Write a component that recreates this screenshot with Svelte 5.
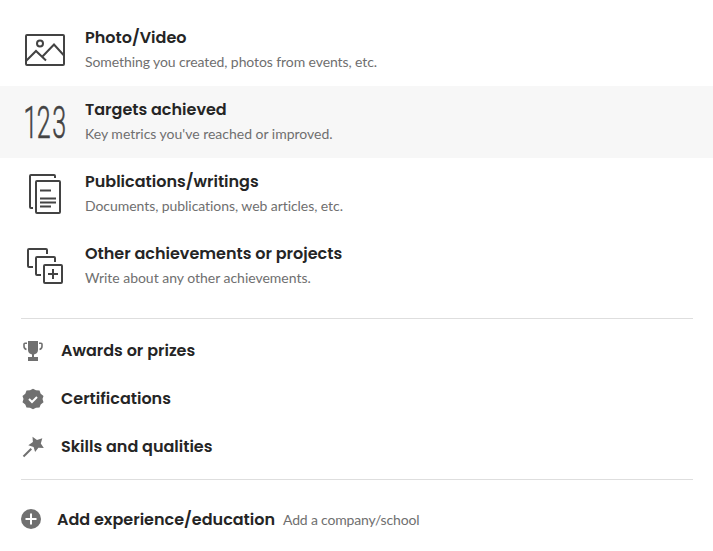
<script lang="ts">
	const featured = [
		{ icon: 'photo', title: 'Photo/Video', text: 'Something you created, photos from events, etc.', tracking: -0.09 },
		{ icon: 'targets', title: 'Targets achieved', text: "Key metrics you've reached or improved.", tracking: -0.01 },
		{ icon: 'documents', title: 'Publications/writings', text: 'Documents, publications, web articles, etc.', tracking: -0.06 },
		{ icon: 'other', title: 'Other achievements or projects', text: 'Write about any other achievements.', tracking: -0.02 }
	];

	const simple = [
		{ icon: 'trophy', title: 'Awards or prizes' },
		{ icon: 'badge', title: 'Certifications' },
		{ icon: 'wand', title: 'Skills and qualities' }
	];

	let active = $state('targets');
</script>

<main class="menu">
	<ul class="featured">
		{#each featured as item}
			<li class="card" class:active={active === item.icon} onmouseenter={() => (active = item.icon)}>
				<svg class="card-icon" viewBox="0 0 48 48" aria-hidden="true">
					{#if item.icon === 'photo'}
						<rect x="5" y="9" width="38" height="30" rx="1" />
						<circle cx="19" cy="17.5" r="3" />
						<path d="M5 35 15 25 25 34.5M21 31 33 18.5 43 29.5" />
					{:else if item.icon === 'targets'}
						<g transform="scale(.57 1)">
							<text y="40" x="4.5 27.5 55">123</text>
						</g>
					{:else if item.icon === 'documents'}
						<path d="M12 38h-2a1 1 0 0 1-1-1V6a1 1 0 0 1 1-1H33a1 1 0 0 1 1 1v2" />
						<rect x="15" y="11" width="24" height="32" rx="1" />
						<path d="M19 20.5h11M19 28.5h16M19 32.5h16M19 36.5h11" />
					{:else}
						<path d="M12 25H8a1 1 0 0 1-1-1V8a1 1 0 0 1 1-1h17a1 1 0 0 1 1 1v4" />
						<path d="M20 33h-4a1 1 0 0 1-1-1V16a1 1 0 0 1 1-1h17a1 1 0 0 1 1 1v4" />
						<rect x="23" y="23" width="18" height="18" rx="1" />
						<path d="M32 27v10M27 32h10" />
					{/if}
				</svg>
				<div class="card-copy">
					<h2>{item.title}</h2>
					<p style={`letter-spacing:${item.tracking}px`}>{item.text}</p>
				</div>
			</li>
		{/each}
	</ul>

	<ul class="simple">
		{#each simple as item}
			<li>
				<svg viewBox="0 0 24 24" aria-hidden="true">
					{#if item.icon === 'trophy'}
						<path d="M7 2h10v9q0 3.500-4 4.500v2.500h4v4H7v-4h4v-2.500q-4-1-4-4.500z" />
						<path class="line" d="M6 4.200H4q-1 0-1 1v2q0 2.500 2.500 3.300M18 4.200h2q1 0 1 1v2q0 2.500-2.500 3.300" />
					{:else if item.icon === 'badge'}
						<path d="m12 1.700 3 1.500 3.500.2 1.200 3.300 2.800 2.200-1 3.100 1 3.200-2.800 2.200-1.200 3.200-3.500.2-3 1.400-3-1.400-3.500-.2-1.200-3.200-2.800-2.200 1-3.200-1-3.100 2.800-2.200 1.200-3.300L9 3.200z" />
						<path class="check" d="m8 12 3 3 5-5" />
					{:else}
						<path d="m11.500 1.700 4.500 3.200 5.300-1.700-1.500 5.200 3 4.500-5.400-.2-3.300 4.400-1.500-5.200-5.300-1.600 4.600-3.200z" />
						<path class="stick" d="m2.500 21.500 7.800-7.800" />
					{/if}
				</svg>
				<h2>{item.title}</h2>
			</li>
		{/each}
	</ul>

	<div class="add">
		<svg viewBox="0 0 20 20" aria-hidden="true">
			<circle cx="10" cy="10" r="10" />
			<path d="M10 4.500v11M4.500 10h11" />
		</svg>
		<h2>Add experience/education</h2>
		<span>Add a company/school</span>
	</div>
</main>

<style>
	:global(body) {
		margin: 0;
		background: #fff;
	}

	.menu {
		box-sizing: border-box;
		height: 551px;
		padding-top: 14px;
		overflow: hidden;
		color: #6f6f6f;
		font-family: Lato, sans-serif;
		font-size: 14px;
	}

	ul,
	h2,
	p {
		margin: 0;
		padding: 0;
	}

	ul {
		list-style: none;
	}

	h2 {
		color: #252525;
		font-family: Poppins, Inter, sans-serif;
		font-size: 16px;
		font-weight: 600;
		line-height: 24px;
		white-space: nowrap;
	}

	.card {
		display: flex;
		align-items: center;
		gap: 16px;
		height: 72px;
		padding-left: 21px;
	}

	.card.active {
		background: #f7f7f7;
	}

	.card-icon {
		width: 48px;
		height: 48px;
		overflow: visible;
		fill: none;
		stroke: #434343;
		stroke-width: 2;
	}

	.card-icon text {
		fill: #434343;
		stroke-width: 0.6;
		font-family: Roboto, sans-serif;
		font-size: 44px;
		font-weight: 300;
	}

	.card-copy p {
		line-height: 24px;
		white-space: nowrap;
	}

	.simple {
		margin: 16px 20px 0 21px;
		padding: 8px 0;
		border-top: 1px solid #dedede;
		border-bottom: 1px solid #dedede;
	}

	.simple li {
		display: flex;
		align-items: center;
		gap: 16px;
		height: 48px;
	}

	.simple svg {
		width: 24px;
		height: 24px;
		fill: #707070;
	}

	.simple .line {
		fill: none;
		stroke: #707070;
		stroke-width: 1.6;
	}

	.simple .check {
		fill: none;
		stroke: #fff;
		stroke-width: 2;
	}

	.simple .stick {
		fill: none;
		stroke: #707070;
		stroke-width: 2;
	}

	.add {
		display: flex;
		align-items: center;
		height: 79px;
		padding-left: 21px;
	}

	.add svg {
		width: 20px;
		height: 20px;
		margin: 0 16px 2px 0;
		fill: #707070;
	}

	.add path {
		stroke: #fff;
		stroke-width: 2;
	}

	.add span {
		margin-left: 8px;
		letter-spacing: -0.18px;
	}
</style>
